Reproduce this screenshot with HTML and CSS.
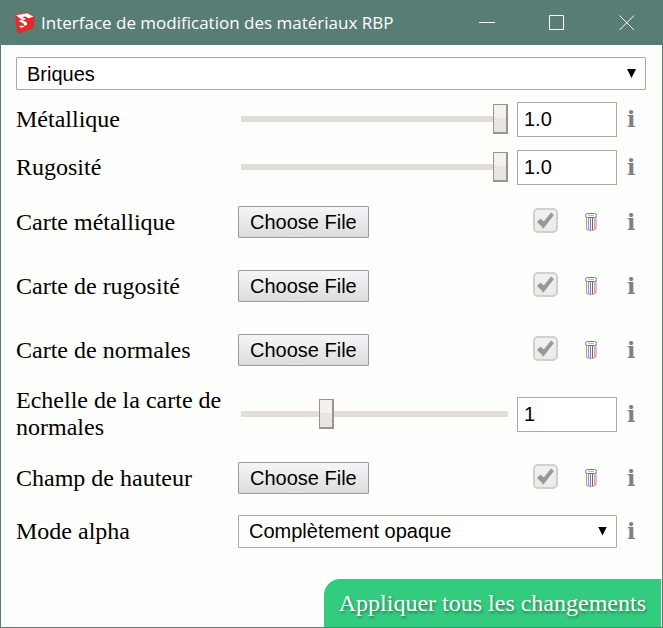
FILE: index.html
```html
<!DOCTYPE html>
<html lang="fr">
<head>
<meta charset="utf-8">
<title>Interface de modification des matériaux RBP</title>
<link rel="stylesheet" href="styles.css">
</head>
<body>
<svg class="sprite" aria-hidden="true">
  <symbol id="trash" viewBox="0 0 14 20">
    <path d="M2.500 5v12" stroke="#c98f78" fill="none"/>
    <path d="M4.500 6v12" stroke="#59a8f2" fill="none"/>
    <path d="M6.500 6v12.500" stroke="#8a78b8" fill="none"/>
    <path d="M8.500 6v12.500" stroke="#a04a78" fill="none"/>
    <path d="M10.500 6v12" stroke="#e8a0a0" fill="none"/>
    <path d="M12 5v12" stroke="#7a94e0" fill="none"/>
    <path d="M2.500 17.500q4.500 2.600 9.200 0" stroke="#999" fill="none"/>
    <rect x="1.500" y="1.500" width="11" height="4" rx="2" fill="#fff" stroke="#777"/>
    <path d="M4 3.500h6" stroke="#bbb" fill="none"/>
  </symbol>
</svg>
<div class="window">
  <header class="titlebar">
    <svg class="logo" viewBox="0 0 20 22" aria-hidden="true">
      <path fill="#e6282d" d="M0 2.500 13 .500l6.500 3.800-.7 11.700L4 21.500 2 19Z"/>
      <path fill="#fff" d="M1 3.200 12.500 1.200l6 3.600-5 1.500-3.200-1.900-3 .6 3.800 2.200-3.500 1Z"/>
      <path fill="#fff" d="m3.500 8.800 3.500-.9 5 2.600v2.500l-3 .8-.2-2Z"/>
      <path fill="#fff" d="m4 14.200 3.200-.8 2.500 1.300-3.500 1Z"/>
    </svg>
    <h1 class="title">Interface de modification des matériaux RBP</h1>
    <div class="window-buttons">
      <button type="button" aria-label="Réduire"><svg viewBox="0 0 16 16"><path d="M0 7.500h16"/></svg></button>
      <button type="button" aria-label="Agrandir"><svg viewBox="0 0 16 16"><path d="M.5.5h14v14H.5z"/></svg></button>
      <button type="button" aria-label="Fermer"><svg viewBox="0 0 16 16"><path d="m.5.500 14.500 14.500M15 .5.500 15"/></svg></button>
    </div>
  </header>
  <form class="content">
    <div class="select material">
      <select aria-label="Matériau"><option>Briques</option></select>
    </div>

    <div class="row row-slider">
      <label for="metal">Métallique</label>
      <input id="metal" type="range" min="0" max="100" value="100">
      <input class="number" type="text" value="1.0" aria-label="Valeur métallique">
      <a class="info" href="#metal">i</a>
    </div>
    <div class="row row-slider">
      <label for="rough">Rugosité</label>
      <input id="rough" type="range" min="0" max="100" value="100">
      <input class="number" type="text" value="1.0" aria-label="Valeur de rugosité">
      <a class="info" href="#rough">i</a>
    </div>
    <div class="row">
      <label for="metal-map">Carte métallique</label>
      <input id="metal-map" type="file">
      <div class="actions">
        <span class="check"><input type="checkbox" checked disabled aria-label="Carte métallique active"><svg viewBox="0 0 25 25"><path d="m4 14 3.500-3.500 3.200 3L18 4.500l3 2.500-10.500 13.500Z"/></svg></span>
        <button class="trash" type="button" aria-label="Supprimer"><svg><use href="#trash"/></svg></button>
      </div>
      <a class="info" href="#metal-map">i</a>
    </div>
    <div class="row">
      <label for="rough-map">Carte de rugosité</label>
      <input id="rough-map" type="file">
      <div class="actions">
        <span class="check"><input type="checkbox" checked disabled aria-label="Carte de rugosité active"><svg viewBox="0 0 25 25"><path d="m4 14 3.500-3.500 3.200 3L18 4.500l3 2.500-10.500 13.500Z"/></svg></span>
        <button class="trash" type="button" aria-label="Supprimer"><svg><use href="#trash"/></svg></button>
      </div>
      <a class="info" href="#rough-map">i</a>
    </div>
    <div class="row">
      <label for="normal-map">Carte de normales</label>
      <input id="normal-map" type="file">
      <div class="actions">
        <span class="check"><input type="checkbox" checked disabled aria-label="Carte de normales active"><svg viewBox="0 0 25 25"><path d="m4 14 3.500-3.500 3.200 3L18 4.500l3 2.500-10.500 13.500Z"/></svg></span>
        <button class="trash" type="button" aria-label="Supprimer"><svg><use href="#trash"/></svg></button>
      </div>
      <a class="info" href="#normal-map">i</a>
    </div>
    <div class="row">
      <label for="scale">Echelle de la carte de normales</label>
      <input id="scale" type="range" min="0" max="100" value="31">
      <input class="number" type="text" value="1" aria-label="Valeur de l'échelle">
      <a class="info" href="#scale">i</a>
    </div>
    <div class="row">
      <label for="height-map">Champ de hauteur</label>
      <input id="height-map" type="file">
      <div class="actions">
        <span class="check"><input type="checkbox" checked disabled aria-label="Champ de hauteur actif"><svg viewBox="0 0 25 25"><path d="m4 14 3.500-3.500 3.200 3L18 4.500l3 2.500-10.500 13.500Z"/></svg></span>
        <button class="trash" type="button" aria-label="Supprimer"><svg><use href="#trash"/></svg></button>
      </div>
      <a class="info" href="#height-map">i</a>
    </div>
    <div class="row row-select">
      <label for="alpha">Mode alpha</label>
      <div class="select wide">
        <select id="alpha"><option>Complètement opaque</option></select>
      </div>
      <a class="info" href="#alpha">i</a>
    </div>
  </form>
  <footer class="footer">
    <button class="apply" type="button">Appliquer tous les changements</button>
  </footer>
</div>
</body>
</html>
```
FILE: styles.css
```css
* {
  box-sizing: border-box;
}

body {
  margin: 0;
  color: #000;
  font: 24px/27px "Liberation Serif", serif;
}

button,
input,
select {
  margin: 0;
  color: inherit;
  font: 20px/24px "Liberation Sans", sans-serif;
}

.sprite {
  display: none;
}

.window {
  display: flex;
  flex-direction: column;
  min-height: 100vh;
  border: 1px solid #587d74;
  background: #fefefd;
}

.titlebar {
  display: flex;
  align-items: center;
  height: 44px;
  padding-left: 14px;
  background: #587d74;
  color: #fff;
}

.logo {
  width: 20px;
  height: 22px;
  margin-right: 6px;
}

.title {
  flex: 1;
  margin: 0;
  font: 17px/24px "Open Sans", sans-serif;
  white-space: nowrap;
}

.window-buttons {
  display: flex;
}

.window-buttons button {
  display: grid;
  place-items: center;
  width: 70px;
  height: 44px;
  padding: 0;
  border: 0;
  background: none;
}

.window-buttons svg {
  width: 16px;
  height: 16px;
  fill: none;
  stroke: #fff;
}

.content {
  padding: 12px 16px 0 15px;
}

.material {
  margin-bottom: 4px;
}

.select {
  position: relative;
}

.select select {
  display: block;
  width: 100%;
  height: 33px;
  padding: 0 32px 0 10px;
  border: 1px solid #a9a9a9;
  border-radius: 1px;
  background: #fff;
  appearance: none;
}

.select::after {
  content: "";
  position: absolute;
  top: 12px;
  right: 10px;
  width: 9px;
  height: 9px;
  background: #000;
  clip-path: polygon(0 0, 100% 0, 50% 100%);
  pointer-events: none;
}

.row {
  display: grid;
  grid-template-columns: 222px minmax(0, 1fr) 100px 29px;
  align-items: center;
  min-height: 64px;
}

.row-slider {
  min-height: 48px;
  padding-top: 2px;
}

.row-select {
  min-height: 42px;
}

.wide {
  grid-column: 2 / 4;
}

input[type="range"] {
  width: auto;
  height: 30px;
  margin: 0 9px 0 3px;
  background: none;
  appearance: none;
}

input[type="range"]::-webkit-slider-runnable-track {
  height: 6px;
  background: #e3ddd7;
}

input[type="range"]::-webkit-slider-thumb {
  width: 15px;
  height: 30px;
  margin-top: -12px;
  border: 1px solid #9c938b;
  border-width: 1px 2px 2px 1px;
  background: linear-gradient(#f3f1ee 50%, #e9e4e1 50%);
  appearance: none;
}

.number {
  width: 100%;
  height: 35px;
  padding: 0 6px;
  border: 1px solid #a9a9a9;
  background: #fff;
}

input[type="file"] {
  justify-self: start;
  height: 32px;
  font-size: 0;
}

input[type="file"]::file-selector-button {
  height: 32px;
  margin: 0;
  padding: 0 11px 1px;
  border: 1px solid #999;
  border-radius: 1px;
  background: linear-gradient(#f6f6f6, #dcdcdc);
  color: #000;
  font: 20px/24px "Liberation Sans", sans-serif;
}

.actions {
  display: flex;
  align-items: center;
  gap: 26px;
  padding-left: 16px;
}

.check {
  position: relative;
  width: 25px;
  height: 25px;
  margin-bottom: 4px;
}

.check input {
  display: block;
  width: 25px;
  height: 25px;
  border: 2px solid #d0d0d0;
  border-radius: 5px;
  background: linear-gradient(#f1f1f1, #ebebeb);
  appearance: none;
}

.check svg {
  position: absolute;
  inset: 0;
  fill: #999;
  pointer-events: none;
}

.trash {
  width: 14px;
  height: 20px;
  padding: 0;
  border: 0;
  background: none;
}

.trash svg {
  display: block;
  width: 14px;
  height: 20px;
}

.info {
  margin-left: 10px;
  color: #808080;
  font: bold 22px/27px "DejaVu Serif", serif;
  text-decoration: none;
}

.footer {
  display: flex;
  justify-content: flex-end;
  margin-top: auto;
  padding-right: 1px;
}

.apply {
  padding: 11px 15px 10px;
  border: 0;
  border-radius: 16px 0 0 0;
  background: #33cc7f;
  color: #fff;
  font: 24px/27px "Liberation Serif", serif;
  text-shadow: 1px 2px 3px rgba(0, 0, 0, 0.4);
}
```
